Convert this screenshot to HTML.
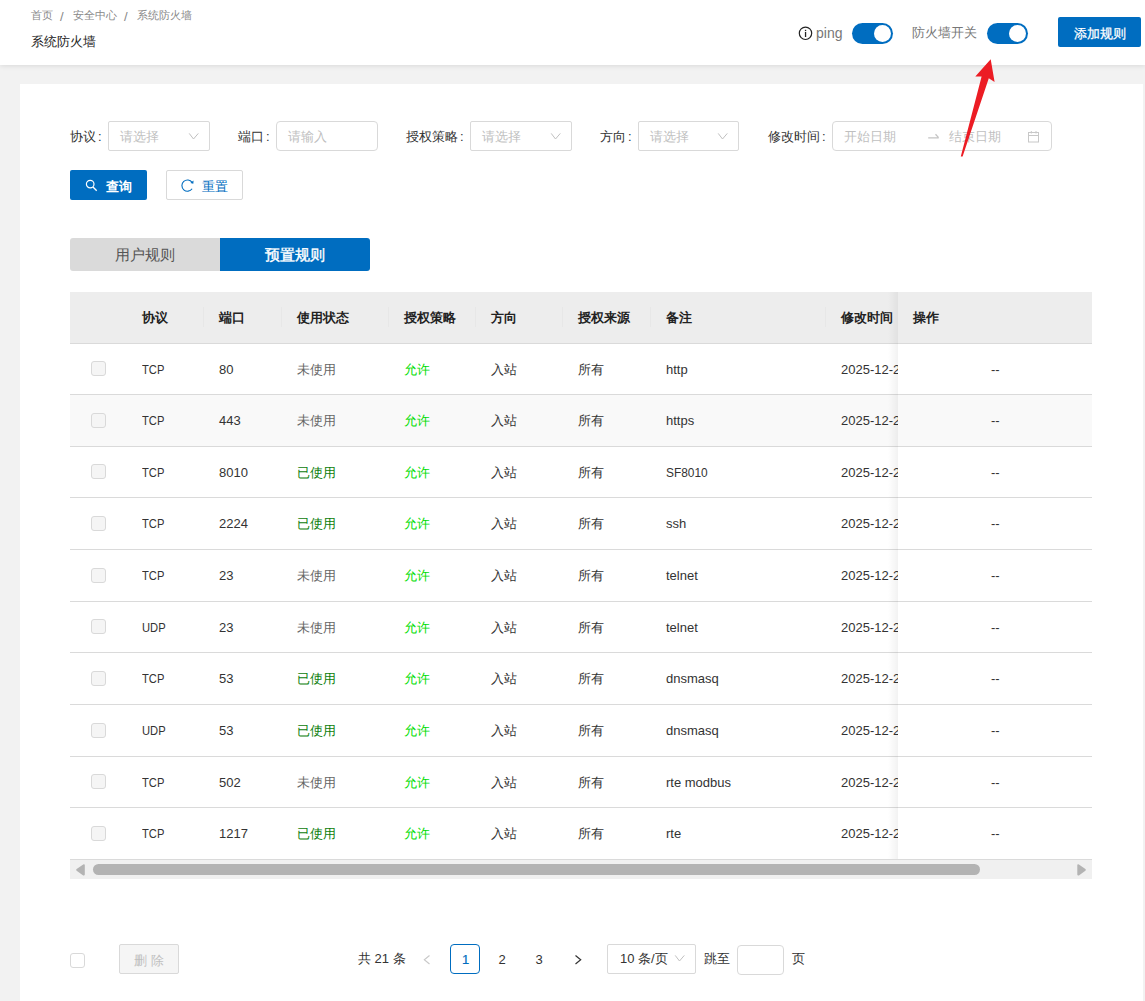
<!DOCTYPE html>
<html><head><meta charset="utf-8">
<style>
*{box-sizing:border-box;margin:0;padding:0}
html,body{width:1145px;height:1001px;overflow:hidden;background:#f2f2f2;font-family:"Liberation Sans",sans-serif;color:#333}
.abs{position:absolute}
#hdr{position:absolute;left:0;top:0;width:1145px;height:65px;background:#fff;box-shadow:0 1px 5px rgba(0,0,0,0.10)}
#card{position:absolute;left:20px;top:84px;width:1123px;height:917px;background:#fff}
.t{position:absolute;white-space:nowrap;line-height:1}
.cx{display:inline-block;transform-origin:0 0}
.btn-blue{position:absolute;background:#006dc0;border-radius:2px}
.toggle{position:absolute;width:41px;height:21px;border-radius:11px;background:#006dc0}
.toggle i{position:absolute;right:2px;top:2px;width:17px;height:17px;border-radius:50%;background:#fff}
.sel{position:absolute;border:1px solid #d9d9d9;border-radius:2px;height:30px;background:#fff}
.inp{position:absolute;border:1px solid #d9d9d9;border-radius:4px;height:30px;background:#fff}
.ph{color:#bfbfbf;font-size:13px}
.lbl{font-size:13px;color:#333}
.lbl b{font-weight:normal;margin-left:2px}
</style></head><body>
<div id="hdr">
<div class="t" style="left:31px;top:10px;font-size:11px;color:#888">首页</div>
<div class="t" style="left:60px;top:10px;font-size:13px;color:#888">/</div>
<div class="t" style="left:73px;top:10px;font-size:11px;color:#888">安全中心</div>
<div class="t" style="left:124px;top:10px;font-size:13px;color:#888">/</div>
<div class="t" style="left:137px;top:10px;font-size:11px;color:#888">系统防火墙</div>
<div class="t" style="left:31px;top:35px;font-size:13px;color:#222">系统防火墙</div>
<svg class="abs" style="left:798px;top:26px" width="15" height="15" viewBox="0 0 15 15"><circle cx="7.5" cy="7.3" r="6.2" fill="none" stroke="#222" stroke-width="1.2"/><rect x="6.9" y="6" width="1.3" height="5" fill="#222"/><rect x="6.9" y="3.8" width="1.3" height="1.3" fill="#222"/></svg>
<div class="t" style="left:816px;top:26px;font-size:14px;color:#777">ping</div>
<div class="toggle" style="left:852px;top:23px"><i></i></div>
<div class="t" style="left:912px;top:26px;font-size:13px;color:#777">防火墙开关</div>
<div class="toggle" style="left:987px;top:23px"><i></i></div>
<div class="btn-blue" style="left:1058px;top:17px;width:83px;height:30px"></div>
<div class="t" style="left:1074px;top:27px;font-size:13px;color:#fff;-webkit-text-stroke:0.25px #fff">添加规则</div>
</div>
<div id="card"></div>
<div class="t lbl" style="left:70px;top:130px">协议<b>:</b></div>
<div class="sel" style="left:108px;top:121px;width:102px"></div>
<div class="t ph" style="left:120px;top:130px">请选择</div>
<svg class="abs" style="left:188px;top:133px" width="11" height="8" viewBox="0 0 11 8"><path d="M1.2 0.4 L5.5 6 L10.3 0.4" fill="none" stroke="#c0c0c0" stroke-width="1"/></svg>
<div class="t lbl" style="left:238px;top:130px">端口<b>:</b></div>
<div class="inp" style="left:276px;top:121px;width:102px"></div>
<div class="t ph" style="left:288px;top:130px">请输入</div>
<div class="t lbl" style="left:406px;top:130px">授权策略<b>:</b></div>
<div class="sel" style="left:470px;top:121px;width:102px"></div>
<div class="t ph" style="left:482px;top:130px">请选择</div>
<svg class="abs" style="left:550px;top:133px" width="11" height="8" viewBox="0 0 11 8"><path d="M1.2 0.4 L5.5 6 L10.3 0.4" fill="none" stroke="#c0c0c0" stroke-width="1"/></svg>
<div class="t lbl" style="left:600px;top:130px">方向<b>:</b></div>
<div class="sel" style="left:638px;top:121px;width:101px"></div>
<div class="t ph" style="left:650px;top:130px">请选择</div>
<svg class="abs" style="left:717px;top:133px" width="11" height="8" viewBox="0 0 11 8"><path d="M1.2 0.4 L5.5 6 L10.3 0.4" fill="none" stroke="#c0c0c0" stroke-width="1"/></svg>
<div class="t lbl" style="left:768px;top:130px">修改时间<b>:</b></div>
<div class="inp" style="left:832px;top:121px;width:220px"></div>
<div class="t ph" style="left:844px;top:130px">开始日期</div>
<svg class="abs" style="left:926px;top:132px" width="15" height="9" viewBox="0 0 15 9"><path d="M2.2 5.9 L12.7 5.9 M9.5 2.3 L12.6 5.6" fill="none" stroke="#c4c4c4" stroke-width="1.3"/></svg>
<div class="t ph" style="left:949px;top:130px">结束日期</div>
<svg class="abs" style="left:1027px;top:130px" width="13" height="13" viewBox="0 0 13 13"><rect x="1.5" y="2.5" width="10" height="9.5" fill="none" stroke="#c8c8c8" stroke-width="1"/><line x1="1.5" y1="5.5" x2="11.5" y2="5.5" stroke="#c8c8c8"/><line x1="4.3" y1="1" x2="4.3" y2="3.5" stroke="#c8c8c8"/><line x1="9" y1="1" x2="9" y2="3.5" stroke="#c8c8c8"/></svg>
<div class="btn-blue" style="left:70px;top:170px;width:77px;height:30px"></div>
<svg class="abs" style="left:84px;top:178px" width="15" height="15" viewBox="0 0 15 15"><circle cx="6.2" cy="6.1" r="3.8" fill="none" stroke="#fff" stroke-width="1.2"/><line x1="9" y1="9" x2="12.7" y2="12.8" stroke="#fff" stroke-width="1.3"/></svg>
<div class="t" style="left:106px;top:180px;font-size:13px;color:#fff;font-weight:bold">查询</div>
<div class="abs" style="left:166px;top:170px;width:77px;height:30px;border:1px solid #d9d9d9;background:#fff;border-radius:2px"></div>
<svg class="abs" style="left:180px;top:178px" width="15" height="15" viewBox="0 0 15 15"><path d="M12.1 4.4 A5.6 5.6 0 1 0 12.1 10.8" fill="none" stroke="#006dc0" stroke-width="1.1"/><path d="M13.5 2.6 L13.3 5.8 L10.4 4.9 Z" fill="#006dc0"/></svg>
<div class="t" style="left:202px;top:180px;font-size:13px;color:#006dc0">重置</div>
<div class="abs" style="left:70px;top:238px;width:150px;height:33px;background:#dadada;border-radius:3px 0 0 3px"></div>
<div class="t" style="left:115px;top:247px;font-size:15px;color:#555">用户规则</div>
<div class="abs" style="left:220px;top:238px;width:150px;height:33px;background:#006dc0;border-radius:0 3px 3px 0"></div>
<div class="t" style="left:265px;top:247px;font-size:15px;color:#fff;-webkit-text-stroke:0.4px #fff">预置规则</div>
<div class="abs" style="left:70px;top:292px;width:1022px;height:51px;background:#ededed"></div>
<div class="abs" style="left:70px;top:343px;width:1022px;height:1px;background:#dadada"></div>
<div class="t" style="left:142px;top:311px;font-size:13px;font-weight:bold;color:#222">协议</div>
<div class="t" style="left:219px;top:311px;font-size:13px;font-weight:bold;color:#222">端口</div>
<div class="t" style="left:297px;top:311px;font-size:13px;font-weight:bold;color:#222">使用状态</div>
<div class="t" style="left:404px;top:311px;font-size:13px;font-weight:bold;color:#222">授权策略</div>
<div class="t" style="left:491px;top:311px;font-size:13px;font-weight:bold;color:#222">方向</div>
<div class="t" style="left:578px;top:311px;font-size:13px;font-weight:bold;color:#222">授权来源</div>
<div class="t" style="left:666px;top:311px;font-size:13px;font-weight:bold;color:#222">备注</div>
<div class="t" style="left:841px;top:311px;font-size:13px;font-weight:bold;color:#222">修改时间</div>
<div class="abs" style="left:203px;top:307px;width:1px;height:20px;background:#e7e7e7"></div>
<div class="abs" style="left:281px;top:307px;width:1px;height:20px;background:#e7e7e7"></div>
<div class="abs" style="left:388px;top:307px;width:1px;height:20px;background:#e7e7e7"></div>
<div class="abs" style="left:475px;top:307px;width:1px;height:20px;background:#e7e7e7"></div>
<div class="abs" style="left:562px;top:307px;width:1px;height:20px;background:#e7e7e7"></div>
<div class="abs" style="left:650px;top:307px;width:1px;height:20px;background:#e7e7e7"></div>
<div class="abs" style="left:825px;top:307px;width:1px;height:20px;background:#e7e7e7"></div>
<div class="abs" style="left:70px;top:344px;width:1022px;height:50px;background:#fff"></div>
<div class="abs" style="left:70px;top:394px;width:1022px;height:1px;background:#dadada"></div>
<div class="abs" style="left:91px;top:361px;width:15px;height:15px;border:1px solid #d9d9d9;border-radius:3px;background:#f5f5f5"></div>
<div class="t" style="left:142px;top:363.0px;font-size:13px;color:#333"><span class="cx" style="transform:scaleX(0.86)">TCP</span></div>
<div class="t" style="left:219px;top:363.0px;font-size:13px;color:#333">80</div>
<div class="t" style="left:297px;top:363.0px;font-size:13px;color:#666">未使用</div>
<div class="t" style="left:404px;top:363.0px;font-size:13px;color:#00dd00">允许</div>
<div class="t" style="left:491px;top:363.0px;font-size:13px;color:#333">入站</div>
<div class="t" style="left:578px;top:363.0px;font-size:13px;color:#333">所有</div>
<div class="t" style="left:666px;top:363.0px;font-size:13px;color:#333">http</div>
<div class="t" style="left:841px;top:363.0px;font-size:13px;color:#333">2025-12-2</div>
<div class="abs" style="left:70px;top:395px;width:1022px;height:51px;background:#f9f9f9"></div>
<div class="abs" style="left:70px;top:446px;width:1022px;height:1px;background:#dadada"></div>
<div class="abs" style="left:91px;top:413px;width:15px;height:15px;border:1px solid #d9d9d9;border-radius:3px;background:#f5f5f5"></div>
<div class="t" style="left:142px;top:414.0px;font-size:13px;color:#333"><span class="cx" style="transform:scaleX(0.86)">TCP</span></div>
<div class="t" style="left:219px;top:414.0px;font-size:13px;color:#333">443</div>
<div class="t" style="left:297px;top:414.0px;font-size:13px;color:#666">未使用</div>
<div class="t" style="left:404px;top:414.0px;font-size:13px;color:#00dd00">允许</div>
<div class="t" style="left:491px;top:414.0px;font-size:13px;color:#333">入站</div>
<div class="t" style="left:578px;top:414.0px;font-size:13px;color:#333">所有</div>
<div class="t" style="left:666px;top:414.0px;font-size:13px;color:#333">https</div>
<div class="t" style="left:841px;top:414.0px;font-size:13px;color:#333">2025-12-2</div>
<div class="abs" style="left:70px;top:447px;width:1022px;height:50px;background:#fff"></div>
<div class="abs" style="left:70px;top:497px;width:1022px;height:1px;background:#dadada"></div>
<div class="abs" style="left:91px;top:464px;width:15px;height:15px;border:1px solid #d9d9d9;border-radius:3px;background:#f5f5f5"></div>
<div class="t" style="left:142px;top:466.0px;font-size:13px;color:#333"><span class="cx" style="transform:scaleX(0.86)">TCP</span></div>
<div class="t" style="left:219px;top:466.0px;font-size:13px;color:#333">8010</div>
<div class="t" style="left:297px;top:466.0px;font-size:13px;color:#0c800c">已使用</div>
<div class="t" style="left:404px;top:466.0px;font-size:13px;color:#00dd00">允许</div>
<div class="t" style="left:491px;top:466.0px;font-size:13px;color:#333">入站</div>
<div class="t" style="left:578px;top:466.0px;font-size:13px;color:#333">所有</div>
<div class="t" style="left:666px;top:466.0px;font-size:13px;color:#333"><span class="cx" style="transform:scaleX(0.915)">SF8010</span></div>
<div class="t" style="left:841px;top:466.0px;font-size:13px;color:#333">2025-12-2</div>
<div class="abs" style="left:70px;top:498px;width:1022px;height:51px;background:#fff"></div>
<div class="abs" style="left:70px;top:549px;width:1022px;height:1px;background:#dadada"></div>
<div class="abs" style="left:91px;top:516px;width:15px;height:15px;border:1px solid #d9d9d9;border-radius:3px;background:#f5f5f5"></div>
<div class="t" style="left:142px;top:517.0px;font-size:13px;color:#333"><span class="cx" style="transform:scaleX(0.86)">TCP</span></div>
<div class="t" style="left:219px;top:517.0px;font-size:13px;color:#333">2224</div>
<div class="t" style="left:297px;top:517.0px;font-size:13px;color:#0c800c">已使用</div>
<div class="t" style="left:404px;top:517.0px;font-size:13px;color:#00dd00">允许</div>
<div class="t" style="left:491px;top:517.0px;font-size:13px;color:#333">入站</div>
<div class="t" style="left:578px;top:517.0px;font-size:13px;color:#333">所有</div>
<div class="t" style="left:666px;top:517.0px;font-size:13px;color:#333">ssh</div>
<div class="t" style="left:841px;top:517.0px;font-size:13px;color:#333">2025-12-2</div>
<div class="abs" style="left:70px;top:550px;width:1022px;height:51px;background:#fff"></div>
<div class="abs" style="left:70px;top:601px;width:1022px;height:1px;background:#dadada"></div>
<div class="abs" style="left:91px;top:568px;width:15px;height:15px;border:1px solid #d9d9d9;border-radius:3px;background:#f5f5f5"></div>
<div class="t" style="left:142px;top:569.0px;font-size:13px;color:#333"><span class="cx" style="transform:scaleX(0.86)">TCP</span></div>
<div class="t" style="left:219px;top:569.0px;font-size:13px;color:#333">23</div>
<div class="t" style="left:297px;top:569.0px;font-size:13px;color:#666">未使用</div>
<div class="t" style="left:404px;top:569.0px;font-size:13px;color:#00dd00">允许</div>
<div class="t" style="left:491px;top:569.0px;font-size:13px;color:#333">入站</div>
<div class="t" style="left:578px;top:569.0px;font-size:13px;color:#333">所有</div>
<div class="t" style="left:666px;top:569.0px;font-size:13px;color:#333">telnet</div>
<div class="t" style="left:841px;top:569.0px;font-size:13px;color:#333">2025-12-2</div>
<div class="abs" style="left:70px;top:602px;width:1022px;height:50px;background:#fff"></div>
<div class="abs" style="left:70px;top:652px;width:1022px;height:1px;background:#dadada"></div>
<div class="abs" style="left:91px;top:619px;width:15px;height:15px;border:1px solid #d9d9d9;border-radius:3px;background:#f5f5f5"></div>
<div class="t" style="left:142px;top:621.0px;font-size:13px;color:#333"><span class="cx" style="transform:scaleX(0.86)">UDP</span></div>
<div class="t" style="left:219px;top:621.0px;font-size:13px;color:#333">23</div>
<div class="t" style="left:297px;top:621.0px;font-size:13px;color:#666">未使用</div>
<div class="t" style="left:404px;top:621.0px;font-size:13px;color:#00dd00">允许</div>
<div class="t" style="left:491px;top:621.0px;font-size:13px;color:#333">入站</div>
<div class="t" style="left:578px;top:621.0px;font-size:13px;color:#333">所有</div>
<div class="t" style="left:666px;top:621.0px;font-size:13px;color:#333">telnet</div>
<div class="t" style="left:841px;top:621.0px;font-size:13px;color:#333">2025-12-2</div>
<div class="abs" style="left:70px;top:653px;width:1022px;height:51px;background:#fff"></div>
<div class="abs" style="left:70px;top:704px;width:1022px;height:1px;background:#dadada"></div>
<div class="abs" style="left:91px;top:671px;width:15px;height:15px;border:1px solid #d9d9d9;border-radius:3px;background:#f5f5f5"></div>
<div class="t" style="left:142px;top:672.0px;font-size:13px;color:#333"><span class="cx" style="transform:scaleX(0.86)">TCP</span></div>
<div class="t" style="left:219px;top:672.0px;font-size:13px;color:#333">53</div>
<div class="t" style="left:297px;top:672.0px;font-size:13px;color:#0c800c">已使用</div>
<div class="t" style="left:404px;top:672.0px;font-size:13px;color:#00dd00">允许</div>
<div class="t" style="left:491px;top:672.0px;font-size:13px;color:#333">入站</div>
<div class="t" style="left:578px;top:672.0px;font-size:13px;color:#333">所有</div>
<div class="t" style="left:666px;top:672.0px;font-size:13px;color:#333">dnsmasq</div>
<div class="t" style="left:841px;top:672.0px;font-size:13px;color:#333">2025-12-2</div>
<div class="abs" style="left:70px;top:705px;width:1022px;height:51px;background:#fff"></div>
<div class="abs" style="left:70px;top:756px;width:1022px;height:1px;background:#dadada"></div>
<div class="abs" style="left:91px;top:723px;width:15px;height:15px;border:1px solid #d9d9d9;border-radius:3px;background:#f5f5f5"></div>
<div class="t" style="left:142px;top:724.0px;font-size:13px;color:#333"><span class="cx" style="transform:scaleX(0.86)">UDP</span></div>
<div class="t" style="left:219px;top:724.0px;font-size:13px;color:#333">53</div>
<div class="t" style="left:297px;top:724.0px;font-size:13px;color:#0c800c">已使用</div>
<div class="t" style="left:404px;top:724.0px;font-size:13px;color:#00dd00">允许</div>
<div class="t" style="left:491px;top:724.0px;font-size:13px;color:#333">入站</div>
<div class="t" style="left:578px;top:724.0px;font-size:13px;color:#333">所有</div>
<div class="t" style="left:666px;top:724.0px;font-size:13px;color:#333">dnsmasq</div>
<div class="t" style="left:841px;top:724.0px;font-size:13px;color:#333">2025-12-2</div>
<div class="abs" style="left:70px;top:757px;width:1022px;height:50px;background:#fff"></div>
<div class="abs" style="left:70px;top:807px;width:1022px;height:1px;background:#dadada"></div>
<div class="abs" style="left:91px;top:774px;width:15px;height:15px;border:1px solid #d9d9d9;border-radius:3px;background:#f5f5f5"></div>
<div class="t" style="left:142px;top:776.0px;font-size:13px;color:#333"><span class="cx" style="transform:scaleX(0.86)">TCP</span></div>
<div class="t" style="left:219px;top:776.0px;font-size:13px;color:#333">502</div>
<div class="t" style="left:297px;top:776.0px;font-size:13px;color:#666">未使用</div>
<div class="t" style="left:404px;top:776.0px;font-size:13px;color:#00dd00">允许</div>
<div class="t" style="left:491px;top:776.0px;font-size:13px;color:#333">入站</div>
<div class="t" style="left:578px;top:776.0px;font-size:13px;color:#333">所有</div>
<div class="t" style="left:666px;top:776.0px;font-size:13px;color:#333">rte modbus</div>
<div class="t" style="left:841px;top:776.0px;font-size:13px;color:#333">2025-12-2</div>
<div class="abs" style="left:70px;top:808px;width:1022px;height:51px;background:#fff"></div>
<div class="abs" style="left:70px;top:859px;width:1022px;height:1px;background:#dadada"></div>
<div class="abs" style="left:91px;top:826px;width:15px;height:15px;border:1px solid #d9d9d9;border-radius:3px;background:#f5f5f5"></div>
<div class="t" style="left:142px;top:827.0px;font-size:13px;color:#333"><span class="cx" style="transform:scaleX(0.86)">TCP</span></div>
<div class="t" style="left:219px;top:827.0px;font-size:13px;color:#333">1217</div>
<div class="t" style="left:297px;top:827.0px;font-size:13px;color:#0c800c">已使用</div>
<div class="t" style="left:404px;top:827.0px;font-size:13px;color:#00dd00">允许</div>
<div class="t" style="left:491px;top:827.0px;font-size:13px;color:#333">入站</div>
<div class="t" style="left:578px;top:827.0px;font-size:13px;color:#333">所有</div>
<div class="t" style="left:666px;top:827.0px;font-size:13px;color:#333">rte</div>
<div class="t" style="left:841px;top:827.0px;font-size:13px;color:#333">2025-12-2</div>
<div class="abs" style="left:888px;top:292px;width:10px;height:567px;background:linear-gradient(to right,rgba(0,0,0,0),rgba(0,0,0,0.05))"></div>
<div class="abs" style="left:898px;top:292px;width:194px;height:51px;background:#ededed"></div>
<div class="abs" style="left:898px;top:343px;width:194px;height:1px;background:#dadada"></div>
<div class="t" style="left:913px;top:311px;font-size:13px;font-weight:bold;color:#222">操作</div>
<div class="abs" style="left:898px;top:344px;width:194px;height:50px;background:#fff"></div>
<div class="abs" style="left:898px;top:394px;width:194px;height:1px;background:#dadada"></div>
<div class="t" style="left:991px;top:363px;font-size:13px;color:#333">--</div>
<div class="abs" style="left:898px;top:395px;width:194px;height:51px;background:#f9f9f9"></div>
<div class="abs" style="left:898px;top:446px;width:194px;height:1px;background:#dadada"></div>
<div class="t" style="left:991px;top:414px;font-size:13px;color:#333">--</div>
<div class="abs" style="left:898px;top:447px;width:194px;height:50px;background:#fff"></div>
<div class="abs" style="left:898px;top:497px;width:194px;height:1px;background:#dadada"></div>
<div class="t" style="left:991px;top:466px;font-size:13px;color:#333">--</div>
<div class="abs" style="left:898px;top:498px;width:194px;height:51px;background:#fff"></div>
<div class="abs" style="left:898px;top:549px;width:194px;height:1px;background:#dadada"></div>
<div class="t" style="left:991px;top:517px;font-size:13px;color:#333">--</div>
<div class="abs" style="left:898px;top:550px;width:194px;height:51px;background:#fff"></div>
<div class="abs" style="left:898px;top:601px;width:194px;height:1px;background:#dadada"></div>
<div class="t" style="left:991px;top:569px;font-size:13px;color:#333">--</div>
<div class="abs" style="left:898px;top:602px;width:194px;height:50px;background:#fff"></div>
<div class="abs" style="left:898px;top:652px;width:194px;height:1px;background:#dadada"></div>
<div class="t" style="left:991px;top:621px;font-size:13px;color:#333">--</div>
<div class="abs" style="left:898px;top:653px;width:194px;height:51px;background:#fff"></div>
<div class="abs" style="left:898px;top:704px;width:194px;height:1px;background:#dadada"></div>
<div class="t" style="left:991px;top:672px;font-size:13px;color:#333">--</div>
<div class="abs" style="left:898px;top:705px;width:194px;height:51px;background:#fff"></div>
<div class="abs" style="left:898px;top:756px;width:194px;height:1px;background:#dadada"></div>
<div class="t" style="left:991px;top:724px;font-size:13px;color:#333">--</div>
<div class="abs" style="left:898px;top:757px;width:194px;height:50px;background:#fff"></div>
<div class="abs" style="left:898px;top:807px;width:194px;height:1px;background:#dadada"></div>
<div class="t" style="left:991px;top:776px;font-size:13px;color:#333">--</div>
<div class="abs" style="left:898px;top:808px;width:194px;height:51px;background:#fff"></div>
<div class="abs" style="left:898px;top:859px;width:194px;height:1px;background:#dadada"></div>
<div class="t" style="left:991px;top:827px;font-size:13px;color:#333">--</div>
<div class="abs" style="left:70px;top:860px;width:1022px;height:19px;background:#f0f0f0"></div>
<svg class="abs" style="left:74px;top:862px" width="14" height="16" viewBox="0 0 14 16"><path d="M9.8 3.2 L9.8 12.6 L3.2 7.9 Z" fill="#b3b3b3" stroke="#b3b3b3" stroke-width="2" stroke-linejoin="round"/></svg>
<div class="abs" style="left:93px;top:864px;width:887px;height:11px;background:#b3b3b3;border-radius:6px"></div>
<svg class="abs" style="left:1075px;top:862px" width="14" height="16" viewBox="0 0 14 16"><path d="M3.3 3.2 L3.3 12.6 L9.8 7.9 Z" fill="#b3b3b3" stroke="#b3b3b3" stroke-width="2" stroke-linejoin="round"/></svg>
<div class="abs" style="left:70px;top:953px;width:15px;height:15px;border:1px solid #d9d9d9;border-radius:3px;background:#fff"></div>
<div class="abs" style="left:119px;top:944px;width:60px;height:30px;border:1px solid #d9d9d9;border-radius:2px;background:#f5f5f5"></div>
<div class="t" style="left:134px;top:954px;font-size:13px;color:#bfbfbf;letter-spacing:4px">删除</div>
<div class="t" style="left:358px;top:952px;font-size:13px;color:#333">共 21 条</div>
<svg class="abs" style="left:422px;top:953px" width="10" height="12" viewBox="0 0 10 12"><path d="M7.5 2.5 L2.3 6.8 L7.5 11" fill="none" stroke="#c8c8c8" stroke-width="1.1"/></svg>
<div class="abs" style="left:450px;top:944px;width:30px;height:30px;border:1px solid #006dc0;border-radius:4px;background:#fff"></div>
<div class="t" style="left:462px;top:953px;font-size:13px;color:#006dc0;-webkit-text-stroke:0.2px #006dc0">1</div>
<div class="t" style="left:498.5px;top:953px;font-size:13px;color:#333">2</div>
<div class="t" style="left:535.5px;top:953px;font-size:13px;color:#333">3</div>
<svg class="abs" style="left:573px;top:953px" width="10" height="12" viewBox="0 0 10 12"><path d="M2.5 2.5 L7.7 6.8 L2.5 11" fill="none" stroke="#333" stroke-width="1.2"/></svg>
<div class="sel" style="left:607px;top:944px;width:89px"></div>
<div class="t" style="left:620px;top:952px;font-size:13px;color:#333">10 条/页</div>
<svg class="abs" style="left:674px;top:955px" width="11" height="8" viewBox="0 0 11 8"><path d="M1.2 0.4 L5.5 6 L10.3 0.4" fill="none" stroke="#c0c0c0" stroke-width="1"/></svg>
<div class="t" style="left:704px;top:952px;font-size:13px;color:#333">跳至</div>
<div class="inp" style="left:737px;top:945px;width:47px;height:30px"></div>
<div class="t" style="left:792px;top:952px;font-size:13px;color:#333">页</div>
<svg class="abs" style="left:0;top:0;pointer-events:none" width="1145" height="1001"><path d="M990.7 59.3 L994.6 81.9 L988.8 78.3 L962.6 156.4 L960.8 156.6 L981.6 76.4 L975.3 76.4 Z" fill="#ec1c24"/></svg>
</body></html>
